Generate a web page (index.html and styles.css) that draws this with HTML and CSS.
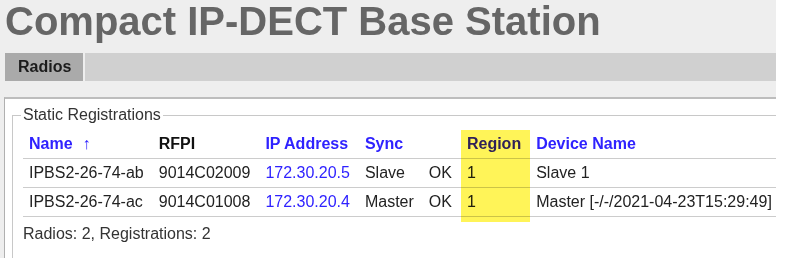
FILE: index.html
```html
<!DOCTYPE html>
<html lang="en">
<head>
<meta charset="utf-8">
<title>Compact IP-DECT Base Station</title>
<link rel="stylesheet" href="styles.css">
</head>
<body>
<div class="page">
  <h1 class="title">Compact IP-DECT Base Station</h1>
  <div class="tabs">
    <div class="tab">Radios</div>
    <div class="tabbar"></div>
  </div>
  <div class="panel">
    <fieldset class="group">
      <legend class="legend">Static Registrations</legend>
      <table class="grid">
        <thead>
          <tr>
            <th class="link">Name<span class="sort">↑</span></th>
            <th>RFPI</th>
            <th class="link">IP Address</th>
            <th class="link">Sync</th>
            <th></th>
            <th class="link region">Region<span class="highlight"></span></th>
            <th class="link last">Device Name</th>
          </tr>
        </thead>
        <tbody>
          <tr>
            <td>IPBS2-26-74-ab</td>
            <td>9014C02009</td>
            <td class="ip">172.30.20.5</td>
            <td>Slave</td>
            <td>OK</td>
            <td>1</td>
            <td class="last">Slave 1</td>
          </tr>
          <tr>
            <td>IPBS2-26-74-ac</td>
            <td>9014C01008</td>
            <td class="ip">172.30.20.4</td>
            <td>Master</td>
            <td>OK</td>
            <td>1</td>
            <td class="last">Master [-/-/2021-04-23T15:29:49]</td>
          </tr>
        </tbody>
      </table>
      <div class="summary">Radios: 2, Registrations: 2</div>
    </fieldset>
  </div>
</div>
</body>
</html>
```

FILE: styles.css
```css
html {
  background: #ffffff;
}

body {
  margin: 0;
  font-family: "Liberation Sans", Arial, sans-serif;
  font-size: 16px;
  color: #222222;
}

.page {
  width: 776px;
  height: 258px;
  overflow: hidden;
  background: #eeeeee;
}

.title {
  margin: 0 0 12px 0;
  padding: 1px 0 0 5px;
  font-size: 40px;
  line-height: 40px;
  font-weight: bold;
  color: #666666;
  white-space: nowrap;
}

.tabs {
  display: flex;
  gap: 2px;
  height: 28px;
  margin-left: 5px;
}

.tab {
  background: #aaaaaa;
  padding: 0 12px 0 13px;
  line-height: 28px;
  font-weight: bold;
  color: #1c1c1c;
}

.tabbar {
  flex: 1;
  background: #d0d0d0;
}

.panel {
  margin: 16px 0 0 4px;
  width: 800px;
  height: 220px;
  background: #ffffff;
  border-top: 2px solid #bdbdbd;
  border-left: 1px solid #b0b0b0;
}

.group {
  margin: 7px 0 0 7px;
  padding: 6px 0 30px 10px;
  border: 1px solid #c8c8c8;
  min-width: 0;
}

.legend {
  margin-left: -2px;
  padding: 0 2px;
  color: #333333;
  line-height: 18px;
}

.grid {
  border-collapse: collapse;
  width: 100%;
}

.grid th,
.grid td {
  padding: 5px 9px 5px 6px;
  line-height: 18px;
  text-align: left;
  white-space: nowrap;
  border-bottom: 1px solid #cccccc;
}

.grid th {
  font-weight: bold;
  color: #111111;
}

.grid .last {
  width: 100%;
}

.grid th.link,
.grid td.ip {
  color: #2f22ff;
}

.sort {
  margin-left: 10px;
  font-weight: normal;
}

.region {
  position: relative;
}

.highlight {
  position: absolute;
  left: 0;
  top: 0;
  right: 0;
  height: 92px;
  background: #fff458;
  mix-blend-mode: multiply;
  pointer-events: none;
}

.summary {
  margin-top: 8px;
  line-height: 18px;
  color: #333333;
}
```
